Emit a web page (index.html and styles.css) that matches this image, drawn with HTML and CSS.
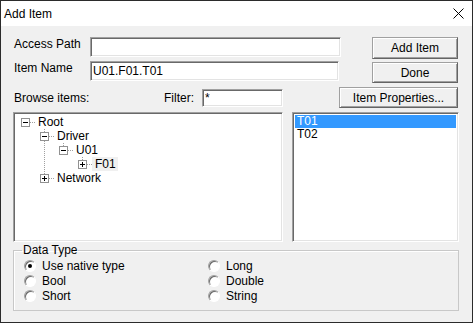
FILE: index.html
```html
<!DOCTYPE html>
<html lang="en">
<head>
    <meta charset="UTF-8">
    <title>Add Item</title>
    <link rel="stylesheet" href="styles.css">
</head>
<body>
    <div class="window">
        <div class="titlebar">
            <span class="title">Add Item</span>
            <svg class="close" width="11" height="11" viewBox="0 0 11 11">
                <path d="M0.5 0.5L10.5 10.5M10.5 0.5L0.5 10.5" stroke="#000" stroke-width="1" fill="none"/>
            </svg>
        </div>

        <div class="content">
            <div class="form-row row-path">
                <label class="field-label">Access Path</label>
                <input class="text-input path-input" type="text" value="">
                <button class="btn btn-add">Add Item</button>
            </div>
            <div class="form-row row-name">
                <label class="field-label">Item Name</label>
                <input class="text-input name-input" type="text" value="U01.F01.T01">
                <button class="btn btn-done">Done</button>
            </div>
            <div class="form-row row-browse">
                <div class="browse">
                    <span>Browse items:</span>
                    <span class="filter-label">Filter:</span>
                    <input class="text-input filter-input" type="text" value="*">
                </div>
                <button class="btn btn-props">Item Properties...</button>
            </div>

            <div class="panes">
                <div class="tree sunken">
                    <div class="tree-row">
                        <span class="node"><i class="box minus"></i></span>
                        <span class="node-label">Root</span>
                    </div>
                    <div class="tree-row">
                        <span class="indent"></span>
                        <span class="node up down"><i class="box minus"></i></span>
                        <span class="node-label">Driver</span>
                    </div>
                    <div class="tree-row">
                        <span class="indent"></span>
                        <span class="indent pipe"></span>
                        <span class="node up"><i class="box minus"></i></span>
                        <span class="node-label">U01</span>
                    </div>
                    <div class="tree-row">
                        <span class="indent"></span>
                        <span class="indent pipe"></span>
                        <span class="indent"></span>
                        <span class="node up"><i class="box plus"></i></span>
                        <span class="node-label selected">F01</span>
                    </div>
                    <div class="tree-row">
                        <span class="indent"></span>
                        <span class="node up"><i class="box plus"></i></span>
                        <span class="node-label">Network</span>
                    </div>
                </div>
                <div class="item-list sunken">
                    <div class="list-item active">T01</div>
                    <div class="list-item">T02</div>
                </div>
            </div>

            <fieldset class="group">
                <legend>Data Type</legend>
                <div class="radio-grid">
                    <label class="radio"><span class="radio-dot checked"></span>Use native type</label>
                    <label class="radio"><span class="radio-dot"></span>Bool</label>
                    <label class="radio"><span class="radio-dot"></span>Short</label>
                    <label class="radio"><span class="radio-dot"></span>Long</label>
                    <label class="radio"><span class="radio-dot"></span>Double</label>
                    <label class="radio"><span class="radio-dot"></span>String</label>
                </div>
            </fieldset>
        </div>
    </div>
</body>
</html>
```

FILE: styles.css
```css
* {
    box-sizing: border-box;
}
body {
    margin: 0;
    font-family: "Liberation Sans", Arial, sans-serif;
    font-size: 12px;
    color: #000;
}
.window {
    width: 473px;
    height: 323px;
    border: 1px solid #2b2b2b;
    background-color: #f0f0f0;
}
.titlebar {
    height: 25px;
    background-color: #fff;
    display: flex;
    align-items: center;
    justify-content: space-between;
    padding: 0 8px 0 3px;
}
.title {
    font-size: 12px;
    margin-top: 1px;
}
.close {
    display: block;
}
.content {
    padding: 11px 13px 0 12px;
}
.form-row {
    display: flex;
    align-items: flex-start;
}
.field-label {
    width: 77px;
    line-height: 14px;
    padding-left: 1px;
}
.row-path {
    height: 22px;
}
.row-name {
    height: 22px;
    margin-top: 2px;
}
.row-browse {
    height: 21px;
    margin-top: 4px;
    align-items: center;
}
.text-input {
    height: 20px;
    margin: 0;
    padding: 0 2px;
    font-family: inherit;
    font-size: 12px;
    color: #000;
    background-color: #fff;
    border: 1px solid;
    border-color: #a0a0a0 #fff #fff #a0a0a0;
    box-shadow: inset 1px 1px 0 #696969, inset -1px -1px 0 #e3e3e3;
    outline: none;
}
.path-input {
    width: 251px;
}
.name-input {
    width: 249px;
}
.filter-input {
    width: 81px;
    height: 18px;
}
.btn {
    margin: 0 1px 0 auto;
    padding: 0;
    font-family: inherit;
    font-size: 12px;
    color: #000;
    background-color: #f0f0f0;
    border: 1px solid;
    border-color: #a0a0a0 #646464 #646464 #a0a0a0;
    box-shadow: inset 1px 1px 0 #fff, inset -1px -1px 0 #a0a0a0;
}
.btn-add {
    width: 86px;
    height: 22px;
}
.btn-done {
    width: 86px;
    height: 21px;
    margin-top: 1px;
}
.btn-props {
    width: 119px;
    height: 21px;
}
.browse {
    width: 270px;
    display: flex;
    align-items: center;
    padding-left: 1px;
}
.filter-label {
    margin-left: auto;
    margin-right: 8px;
}

/* tree + list */
.panes {
    display: flex;
    height: 130px;
    margin-top: 4px;
}
.sunken {
    background-color: #fff;
    border: 1px solid;
    border-color: #a0a0a0 #fff #fff #a0a0a0;
    box-shadow: inset 1px 1px 0 #696969, inset -1px -1px 0 #e3e3e3;
    padding: 2px;
}
.tree {
    width: 270px;
    padding-top: 2px;
}
.item-list {
    width: 167px;
    margin-left: auto;
}
.tree-row {
    display: flex;
    height: 14px;
}
.indent,
.node {
    width: 19px;
    flex: none;
}
.pipe {
    background: repeating-linear-gradient(to bottom, #a0a0a0 0 1px, transparent 1px 2px) 9px 0 / 1px 100% no-repeat;
}
.node {
    background: repeating-linear-gradient(to right, #a0a0a0 0 1px, transparent 1px 2px) 14px 7px / 5px 1px no-repeat;
}
.node.up {
    background:
        repeating-linear-gradient(to right, #a0a0a0 0 1px, transparent 1px 2px) 14px 7px / 5px 1px no-repeat,
        repeating-linear-gradient(to bottom, #a0a0a0 0 1px, transparent 1px 2px) 9px 0 / 1px 3px no-repeat;
}
.node.up.down {
    background:
        repeating-linear-gradient(to right, #a0a0a0 0 1px, transparent 1px 2px) 14px 7px / 5px 1px no-repeat,
        repeating-linear-gradient(to bottom, #a0a0a0 0 1px, transparent 1px 2px) 9px 0 / 1px 100% no-repeat;
}
.box {
    display: grid;
    place-items: center;
    width: 9px;
    height: 9px;
    margin: 3px 0 0 5px;
    border: 1px solid #919191;
    background-color: #fff;
}
.box::before,
.box::after {
    content: "";
    grid-area: 1 / 1;
    background-color: #000;
}
.box::before {
    width: 5px;
    height: 1px;
}
.box.plus::after {
    width: 1px;
    height: 5px;
}
.node-label {
    line-height: 14px;
    padding: 0 2px 0 3px;
    white-space: nowrap;
}
.node-label.selected {
    background-color: #f0f0f0;
}
.list-item {
    line-height: 13px;
    padding-left: 2px;
}
.list-item.active {
    background-color: #3399ff;
    color: #fff;
}

/* data type group */
.group {
    height: 68px;
    margin: 1px 0 0;
    padding: 0 0 0 8px;
    border: 1px solid #c8c8c8;
    box-shadow: inset 1px 1px 0 #fff;
}
.group legend {
    padding: 0 1px;
    line-height: 14px;
}
.radio-grid {
    display: grid;
    grid-template-columns: 184px auto;
    grid-template-rows: repeat(3, 15px);
    grid-auto-flow: column;
    margin-top: 1px;
    padding-left: 2px;
}
.radio {
    display: flex;
    align-items: center;
}
.radio-dot {
    display: grid;
    place-items: center;
    width: 12px;
    height: 12px;
    margin-right: 6px;
    border-radius: 50%;
    background-color: #fff;
    border: 1px solid;
    border-color: #a0a0a0 #fff #fff #a0a0a0;
    box-shadow: inset 1px 1px 0 #696969;
}
.radio-dot.checked::after {
    content: "";
    width: 4px;
    height: 4px;
    border-radius: 50%;
    background-color: #000;
}
```
